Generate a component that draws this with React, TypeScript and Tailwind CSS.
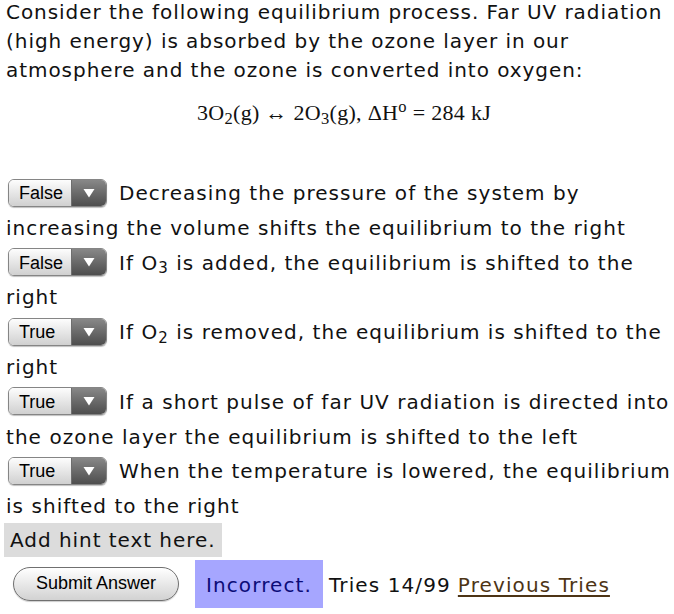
import React from "react"

const font = { fontFamily: '"DejaVu Sans", Verdana, sans-serif' }

type Item = { value: string; text: React.ReactNode }

const items: Item[] = [
  { value: "False", text: "Decreasing the pressure of the system by increasing the volume shifts the equilibrium to the right" },
  { value: "False", text: <>If O<sub>3</sub> is added, the equilibrium is shifted to the right</> },
  { value: "True", text: <>If O<sub>2</sub> is removed, the equilibrium is shifted to the right</> },
  { value: "True", text: "If a short pulse of far UV radiation is directed into the ozone layer the equilibrium is shifted to the left" },
  { value: "True", text: "When the temperature is lowered, the equilibrium is shifted to the right" },
]

function FakeSelect({ value }: { value: string }) {
  return (
    <span className="inline-flex align-middle h-[28px] w-[99px] ml-[2px] mr-[12px] -mt-[4px] rounded-[6px] border border-[#858585] overflow-hidden shadow-[0_1px_1px_rgba(0,0,0,0.25)] tracking-normal">
      <span
        className="flex-1 flex items-center pl-[10px] pt-[1px] text-[18px] text-black bg-gradient-to-b from-[#fdfdfd] to-[#d0d0d0] leading-none"
        style={{ fontFamily: '"Liberation Sans", Arial, sans-serif' }}
      >
        {value}
      </span>
      <span className="w-[35px] flex items-center justify-center bg-gradient-to-b from-[#888888] to-[#4e4e4e] border-l border-[#6e6e6e]">
        <svg width="12" height="10" viewBox="0 0 12 10">
          <path d="M0.5 1 L11.5 1 L6 9.5 Z" fill="#ffffff" />
        </svg>
      </span>
    </span>
  )
}

export default function App() {
  return (
    <div className="bg-white w-[674px] h-[614px] overflow-hidden text-[#111] pl-[6px] pr-[2px] tracking-[0.95px]" style={font}>
      <p className="text-[20px] leading-[29px] -mt-[2px] pr-[4px]">
        Consider the following equilibrium process. Far UV radiation (high energy) is absorbed by the ozone layer in our atmosphere and the ozone is converted into oxygen:
      </p>
      <div
        className="mt-[14px] h-[28px] leading-[28px] text-[22px] text-center pl-[10px] tracking-[0.3px]"
        style={{ fontFamily: '"Liberation Serif", "Times New Roman", serif' }}
      >
        3O<sub>2</sub>(g) ↔ 2O<sub>3</sub>(g), ΔH<sup>o</sup> = 284 kJ
      </div>
      <div className="mt-[49px] text-[20px] leading-[34.8px] tracking-[1.05px]">
        {items.map((item, i) => (
          <div key={i}>
            <FakeSelect value={item.value} />
            {item.text}
          </div>
        ))}
      </div>
      <div className="-ml-[2px] -mt-[1px] inline-block bg-[#dcdcdc] px-[6px] h-[34px] leading-[34px] text-[20px]">
        Add hint text here.
      </div>
      <div className="flex items-center mt-[3px] h-[48px] tracking-[1.1px]">
        <button
          className="ml-[7px] w-[166px] h-[34px] rounded-full border border-[#707070] bg-gradient-to-b from-[#ffffff] to-[#d2d2d2] text-[18px] text-black shadow-[0_1px_1px_rgba(0,0,0,0.2)] tracking-normal"
          style={{ fontFamily: '"Liberation Sans", Arial, sans-serif' }}
        >
          Submit Answer
        </button>
        <span className="ml-[16px] h-[48px] flex items-center bg-[#a6a6ff] px-[11px] pt-[3px] text-[20px] text-[#0c0c78]">
          Incorrect.
        </span>
        <span className="ml-[6px] pt-[3px] text-[20px] text-[#111]">Tries 14/99</span>
        <a href="#" className="ml-[7px] pt-[3px] text-[20px] text-[#4d3415] underline underline-offset-[3px]">
          Previous Tries
        </a>
      </div>
    </div>
  )
}
